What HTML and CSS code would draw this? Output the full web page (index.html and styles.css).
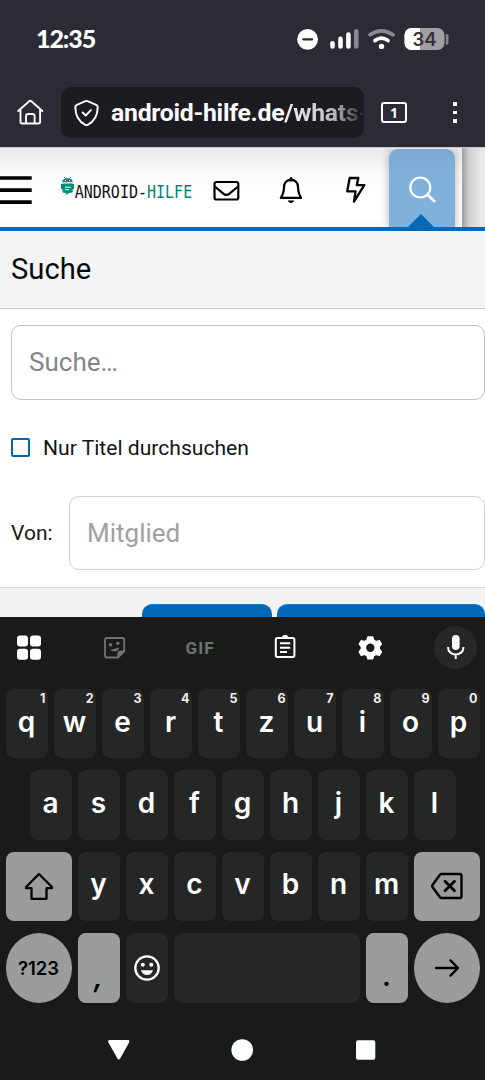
FILE: index.html
```html
<!DOCTYPE html>
<html lang="de">
<head>
<meta charset="utf-8">
<title>Suche – Android-Hilfe</title>
<link rel="stylesheet" href="styles.css">
</head>
<body>
<div class="screen">
  <div class="status">
    <span class="time">12:35</span>
    <div class="status-icons">
      <svg width="160" height="30" viewBox="295 25 160 30">
        <circle cx="307.6" cy="39.3" r="10.4" fill="#fff"/><path d="M303.2 39.3h9" stroke="#2c2a34" stroke-width="2.2" stroke-linecap="round"/>
        <g stroke="#fff" stroke-width="4.6" stroke-linecap="round"><path d="M332.5 43.2v3.3M340.5 38.9v7.6M348.4 34.5v12"/><path d="M356.3 31.3v15.2" stroke="#8b8991"/></g>
        <g fill="none" stroke-width="3.7" stroke-linecap="round"><path d="M370 34.8q11.5-7.8 23 0" stroke="#8b8991"/><path d="M375 40.6q6.5-4.8 13 0" stroke="#fff"/></g>
        <circle cx="381.5" cy="46.4" r="2.7" fill="#fff"/>
        <clipPath id="battery"><rect x="404.5" y="28" width="40" height="22" rx="7"/></clipPath>
        <g clip-path="url(#battery)"><rect x="404" y="28" width="41" height="22" fill="#a09fa4"/><rect x="404" y="28" width="16" height="22" fill="#fff"/></g>
        <path d="M445.8 34h1a1.7 1.7 0 0 1 1.7 1.7v7.2a1.7 1.7 0 0 1-1.7 1.7h-1z" fill="#88868e"/>
        <text class="battery-text" x="424.5" y="46" text-anchor="middle">34</text>
      </svg>
    </div>
  </div>
  <div class="browser">
    <svg class="home" width="28" height="28" viewBox="0 0 28 28" fill="none" stroke="#fbfbfe" stroke-width="1.9" stroke-linecap="round" stroke-linejoin="round"><path d="M2.2 12 13.200 2.300q1.100-1 2.200 0l11 9.700M4.500 10.500v12.200q0 1.800 1.800 1.800h16q1.800 0 1.800-1.800V10.500M10 24.500v-7.200q0-2.300 2.300-2.300h4q2.300 0 2.300 2.300v7.200"/></svg>
    <div class="url">
      <svg width="26" height="28" viewBox="0 0 26 28" fill="none" stroke="#fbfbfe" stroke-width="2" stroke-linecap="round" stroke-linejoin="round"><path d="M11.500 2.200q1-.5 2 0l8.700 3.700q1.500.6 1.500 2.200c0 8.500-3.400 14.500-10 17.800q-1.200.6-2.400 0C4.700 22.600 1.300 16.600 1.300 8.100q0-1.600 1.500-2.200zM8.700 13.500l3 3 5.200-5.400"/></svg>
      <span class="address">android-hilfe.de<span class="path">/whats-</span></span>
    </div>
    <div class="tabs">1</div>
    <div class="dots"><i></i><i></i><i></i></div>
  </div>
  <main class="page">
    <header class="nav">
      <svg class="burger" width="32" height="30" viewBox="0 0 32 30"><path d="M0 3h31.700M0 15.200h31.700M0 27.200h31.700" stroke="#000" stroke-width="3.700"/></svg>
      <svg class="logo" width="134" height="24" viewBox="59 175 134 24">
        <g fill="#04897a"><path d="M61.300 182.200q0-4 5.200-4t5.200 4z"/><path d="m63.200 177 1.400 2M69.800 177l-1.400 2" stroke="#04897a" stroke-width=".8"/><path d="M61.500 183.400h10.200v8q0 1.400-1.400 1.400h-1.800L65.200 195v-2.200h-2.300q-1.400 0-1.400-1.400zM60 184h1.600v5H60zM71.400 184H73v5h-1.600z"/></g>
        <g fill="#fff"><circle cx="64.400" cy="180.500" r=".6"/><circle cx="68.600" cy="180.500" r=".6"/></g><path d="M64 187.200h5.800M64 189.700h4" stroke="#fff" stroke-width="1"/>
        <text class="wordmark" x="73.700" y="197.600" textLength="117.500" lengthAdjust="spacingAndGlyphs">ANDROID-<tspan fill="#048372">HILFE</tspan></text>
      </svg>
      <svg class="mail" width="27" height="22" viewBox="0 0 27 22" fill="none" stroke="#000" stroke-width="2.200"><rect x="1.500" y="2" width="23.800" height="17.500" rx="2"/><path d="m1.800 6.500 8.800 7.300q2.800 2.200 5.600 0L25 6.500"/></svg>
      <svg class="bell" width="24" height="28" viewBox="0 0 24 28" fill="none" stroke="#000" stroke-width="2.200" stroke-linejoin="round"><path d="M12 3.800c-5 0-6.800 3.200-7 7.500-.2 5.500-1.200 7.800-3.200 10.500h20.400c-2-2.700-3-5-3.200-10.500-.2-4.300-2-7.500-7-7.500z"/><path d="M12 4V2.500" stroke-linecap="round" stroke-width="3"/><path d="M8.700 24.500h6.600q-.6 2.400-3.300 2.400t-3.300-2.400z" fill="#000" stroke="none"/></svg>
      <svg class="bolt" width="22" height="28" viewBox="0 0 22 28" fill="none" stroke="#000" stroke-width="2.300" stroke-linejoin="round"><path d="M4.700 2h8.600l-1.500 7.200h7.500L9 25.600l1.600-10.300H2.200z"/></svg>
      <div class="search-tab">
        <svg width="28" height="28" viewBox="0 0 28 28" fill="none" stroke="#fff" stroke-width="2.200"><circle cx="11.300" cy="11.500" r="10"/><path d="m18.500 18.700 7.500 7.200" stroke-width="2.700"/></svg>
      </div>
      <div class="nav-edge"></div>
    </header>
    <h1 class="title">Suche</h1>
    <form class="form">
      <div class="field query">Suche…</div>
      <div class="check-row"><span class="checkbox"></span><span>Nur Titel durchsuchen</span></div>
      <div class="member-row"><span class="label">Von:</span><div class="field member">Mitglied</div></div>
    </form>
    <div class="actions"><span class="action small"></span><span class="action large"></span></div>
  </main>
  <section class="keyboard">
    <div class="tools">
      <svg width="485" height="62" viewBox="0 617 485 62">
        <g fill="#fff"><rect x="17" y="635.500" width="11" height="11" rx="3"/><rect x="30" y="635.500" width="11" height="11" rx="3"/><rect x="17" y="648.800" width="11" height="11" rx="3"/><rect x="30" y="648.800" width="11" height="11" rx="3"/></g>
        <path d="M107 638h15.200q2 0 2 2v11.300l-6.300 6.200H107q-2 0-2-2V640q0-2 2-2z" fill="none" stroke="#717372" stroke-width="1.800"/><path d="m117 658.300.5-5.500q.2-2 2-2l5.300-.3z" fill="#717372"/><g fill="#717372"><circle cx="110.500" cy="644.700" r="1.700"/><circle cx="117.800" cy="643.200" r="1.700"/><path d="m110 650 9.200-2.500q-.6 3.500-4 3.800-3 .3-5.200-1.300z"/></g>
        <text class="gif" x="185.500" y="653.500" textLength="28">GIF</text>
        <rect x="275.800" y="638" width="18.600" height="19" rx="1.800" fill="none" stroke="#fff" stroke-width="2"/><path d="M281.500 637.500q1-2.800 3.600-2.800t3.600 2.800z" fill="#fff"/><path d="M280 643.200h10.200M280 647.700h10.200M280 652h7" stroke="#fff" stroke-width="2"/>
        <path d="M368 637h4.600l1 3.200 2.500 1.400 3.200-1 2 3.500-2.100 2.500v2.700l2.100 2.500-2 3.500-3.200-1-2.500 1.400-1 3H368l-1-3-2.500-1.400-3.200 1-2-3.500 2.100-2.500v-2.700l-2.100-2.500 2-3.500 3.200 1 2.500-1.400z" fill="#fff" stroke="#fff" stroke-width="1.500" stroke-linejoin="round"/><circle cx="370.300" cy="647.800" r="4.200" fill="#191b1a"/>
        <circle cx="455.500" cy="647.500" r="21.500" fill="#262827"/><rect x="452" y="635" width="7.600" height="15" rx="3.800" fill="#fff"/><path d="M448 647c0 10 15.500 10 15.500 0M455.700 654.500v4.500" fill="none" stroke="#fff" stroke-width="2"/>
      </svg>
    </div>
    <div class="keys">
      <div class="row">
        <span class="key">q<sup>1</sup></span><span class="key">w<sup>2</sup></span><span class="key">e<sup>3</sup></span><span class="key">r<sup>4</sup></span><span class="key">t<sup>5</sup></span><span class="key">z<sup>6</sup></span><span class="key">u<sup>7</sup></span><span class="key">i<sup>8</sup></span><span class="key">o<sup>9</sup></span><span class="key">p<sup>0</sup></span>
      </div>
      <div class="row middle">
        <span class="key">a</span><span class="key">s</span><span class="key">d</span><span class="key">f</span><span class="key">g</span><span class="key">h</span><span class="key">j</span><span class="key">k</span><span class="key">l</span>
      </div>
      <div class="row">
        <span class="key wide light"><svg width="30" height="28" viewBox="0 0 30 28" fill="none" stroke="#000" stroke-width="2.300" stroke-linejoin="round"><path d="M15 2 28 15v1.200H22.500v10q0 .8-.8.800H8.300q-.8 0-.8-.8v-10H2V15z"/></svg></span>
        <span class="key">y</span><span class="key">x</span><span class="key">c</span><span class="key">v</span><span class="key">b</span><span class="key">n</span><span class="key">m</span>
        <span class="key wide light"><svg width="34" height="28" viewBox="0 0 34 28" fill="none" stroke="#000" stroke-width="2.400" stroke-linejoin="round" stroke-linecap="round"><path d="M11.500 2h18.300q1.700 0 1.700 1.700v20.600q0 1.700-1.700 1.700H11.500q-1 0-1.700-1L2.500 15q-.7-1 0-2l7.300-10q.7-1 1.700-1z"/><path d="m15 9.300 9.500 9.500M24.500 9.300 15 18.800" stroke-width="2.700"/></svg></span>
      </div>
      <div class="row">
        <span class="key wide light round">?123</span>
        <span class="key light punct comma">,</span>
        <span class="key"><svg width="28" height="28" viewBox="0 0 28 28"><circle cx="14" cy="14" r="11.700" fill="none" stroke="#fff" stroke-width="2.300"/><circle cx="9.800" cy="10.800" r="2" fill="#fff"/><circle cx="18.200" cy="10.800" r="2" fill="#fff"/><path d="M8 16.200h12q-1.300 4.800-6 4.800t-6-4.800z" fill="#fff"/></svg></span>
        <span class="key space"></span>
        <span class="key light punct">.</span>
        <span class="key wide light round"><svg width="26" height="20" viewBox="0 0 26 20" fill="none" stroke="#000" stroke-width="2.400" stroke-linecap="round" stroke-linejoin="round"><path d="M2 10h22M16.500 2.300 24 10l-7.500 7.700"/></svg></span>
      </div>
    </div>
    <div class="system-nav">
      <svg width="485" height="30" viewBox="0 1035 485 30" fill="#fff"><path d="M109.500 1041.500h18.500L118.800 1058z" stroke="#fff" stroke-width="2.800" stroke-linejoin="round"/><circle cx="242.200" cy="1050" r="10.800"/><rect x="356" y="1040.300" width="19.300" height="19.500" rx="2.200"/></svg>
    </div>
  </section>
</div>
</body>
</html>
```
FILE: styles.css
```css
* { box-sizing: border-box; }
body { margin: 0; font-family: Roboto, sans-serif; color: #141414; }
svg { display: block; flex: none; }
.screen { width: 485px; height: 1080px; overflow: hidden; display: flex; flex-direction: column; background: #2c2a34; }

.status { height: 78px; padding: 25px 30px 0 36px; display: flex; justify-content: space-between; }
.time { height: 30px; color: #fff; font: 900 25px/26px Lato, sans-serif; letter-spacing: -1.1px; }
.battery-text { font: 600 18.500px Inter, sans-serif; fill: #33313a; }

.browser { height: 69px; padding: 9px 0 9px 16px; display: flex; align-items: center; }
.url { width: 303.500px; height: 51px; margin-left: 16.500px; padding-left: 13px; display: flex; align-items: center; gap: 11.500px; background: #1c1b22; border-radius: 10px; overflow: hidden; }
.address { color: #fbfbfe; font-size: 24.800px; letter-spacing: -.27px; font-weight: 700; line-height: 52px; white-space: nowrap; }
.path { background: linear-gradient(90deg, #f5f5f8, #b8b7bc 60%, #4a4950 86%, #1c1b22 97%); -webkit-background-clip: text; background-clip: text; color: transparent; }
.tabs { flex: none; width: 26px; height: 21px; margin-left: 17px; border: 2px solid #fbfbfe; border-radius: 3px; color: #fbfbfe; font: 700 14px/17px "Open Sans", sans-serif; text-align: center; }
.dots { margin-left: 46px; display: flex; flex-direction: column; gap: 5px; }
.dots i { width: 4px; height: 3.600px; background: #fbfbfe; }

.page { height: 470px; overflow: hidden; background: #fff; }
.nav { height: 84px; display: flex; align-items: flex-start; border-top: 1px solid #c8c7c8; border-bottom: 4px solid #0067b9; background: linear-gradient(#e9e9e9, #fbfbfb 25px, #fff 45px, #fff 70px, #fafafa); }
.burger { margin-top: 27px; }
.logo { margin: 27px 0 0 27.500px; overflow: visible; }
.wordmark { font-family: "DejaVu Sans Mono", monospace; font-size: 17.400px; fill: #111; }
.mail { margin: 32px 0 0 19px; }
.bell { margin: 28px 0 0 39px; }
.bolt { margin: 28px 0 0 42.500px; }
.search-tab { width: 66px; height: 78px; margin: 1px 0 0 22px; padding: 27px 0 0 20px; border-radius: 9px 9px 0 0; background: linear-gradient(#7ba9cf, #80b1da 25px); box-shadow: 0 0 10px rgba(0,0,0,.3); display: flex; flex-direction: column; clip-path: inset(0 -20px 0 -20px); }
.search-tab::after { content: ""; width: 26px; height: 13px; margin: 10px 0 0 -1px; background: #0067b9; clip-path: polygon(50% 0, 100% 100%, 0 100%); }
.nav-edge { flex: 1; height: 79px; margin-left: 6.500px; background: linear-gradient(90deg, #a0a0a0, #d0d0d0 7px, #e9e9e9 20px); }

.title { height: 78px; margin: 0; padding-left: 11px; background: #f4f4f4; border-bottom: 1.500px solid #d0d0d0; font-size: 29.200px; line-height: 77px; font-weight: 400; color: #0a0a0a; }
.form { height: 277.500px; padding: 16px 0 0 11px; }
.field { height: 75px; border: 1.500px solid #c2c2c2; border-radius: 10px; font-size: 26px; line-height: 73px; padding-left: 17px; color: #858585; }
.check-row { height: 96px; display: flex; align-items: center; gap: 13px; font-size: 21.100px; padding-bottom: 2px; }
.checkbox { width: 19px; height: 19px; border: 2px solid #0067b9; border-radius: 2px; }
.member-row { display: flex; align-items: center; font-size: 21px; }
.label { width: 58px; }
.member { flex: 1; height: 74px; border-color: #d0d0d0; color: #a0a0a0; line-height: 72px; padding-left: 17px; }
.actions { height: 31px; padding: 16.500px 0 0 142.300px; display: flex; gap: 5px; background: #f3f3f3; border-top: 1.500px solid #d3d3d3; }
.action { height: 40px; border-radius: 10px; background: #0067b9; border-top: 1px solid #1c7dc7; }
.small { width: 130px; flex: none; }
.large { width: 208px; flex: none; }

.keyboard { height: 463px; background: #191b1a; }
.tools { height: 72px; }
.gif { font: 700 17px Roboto, sans-serif; fill: #717372; }
.keys { display: flex; flex-direction: column; gap: 12px; padding: 0 5.500px; width: 485px; }
.row { display: flex; gap: 6px; height: 69.400px; width: 474px; }
.middle { padding: 0 24px; }
.key { position: relative; flex: 1 1 0; display: flex; align-items: center; justify-content: center; background: #252726; border-radius: 8px; color: #fff; font: 600 28px/66px Inter, sans-serif; padding-bottom: 4px; }
.key sup { position: absolute; top: 2px; right: 2px; font: 700 12.500px/15px Inter, sans-serif; color: #eee; }
.key svg { position: relative; top: 2px; }
.wide { flex: 0 0 66px; }
.light { background: #9b9d9c; color: #000; }
.round { border-radius: 50%; font-size: 18.500px; padding-bottom: 0; }
.round svg { top: 0; }
.punct { align-items: flex-end; line-height: 36px; padding-bottom: 9px; flex: 0 0 42px; }
.comma { font-style: italic; padding-bottom: 8px; }
.space { flex: 0 0 186px; }
.system-nav { height: 30px; margin-top: 32.400px; }
```
